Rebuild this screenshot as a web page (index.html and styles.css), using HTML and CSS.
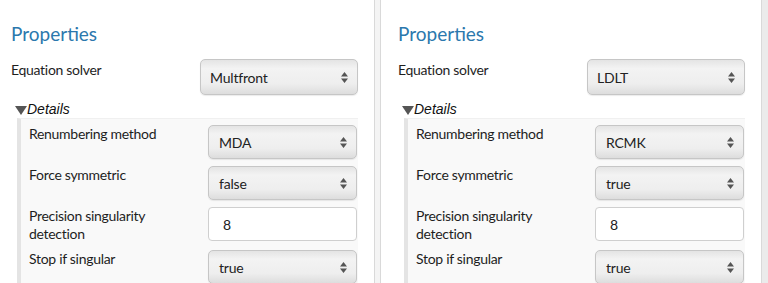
FILE: index.html
```html
<!DOCTYPE html>
<html lang="en">
<head>
  <meta charset="UTF-8">
  <title>Solver properties</title>
  <link rel="stylesheet" href="styles.css">
</head>
<body>
  <div class="page">
    <section class="panel panel-left">
      <h2 class="title">Properties</h2>
      <div class="row main-row">
        <span class="label">Equation solver</span>
        <div class="select wide"><span>Multfront</span>
          <svg class="arrows" width="7" height="11" viewBox="0 0 7 11"><path d="M3.5 0L7 4.5H0Z M3.5 11L0 6.5H7Z" fill="#555"/></svg>
        </div>
      </div>
      <div class="details-head">
        <svg class="caret" width="12" height="9" viewBox="0 0 12 9"><path d="M0 0H12L6 9Z" fill="#555"/></svg>
        <em>Details</em>
      </div>
      <div class="details">
        <div class="row">
          <span class="label">Renumbering method</span>
          <div class="select"><span>MDA</span>
            <svg class="arrows" width="7" height="11" viewBox="0 0 7 11"><path d="M3.5 0L7 4.5H0Z M3.5 11L0 6.5H7Z" fill="#555"/></svg>
          </div>
        </div>
        <div class="row">
          <span class="label">Force symmetric</span>
          <div class="select"><span>false</span>
            <svg class="arrows" width="7" height="11" viewBox="0 0 7 11"><path d="M3.5 0L7 4.5H0Z M3.5 11L0 6.5H7Z" fill="#555"/></svg>
          </div>
        </div>
        <div class="row">
          <span class="label">Precision singularity detection</span>
          <div class="input">8</div>
        </div>
        <div class="row">
          <span class="label">Stop if singular</span>
          <div class="select"><span>true</span>
            <svg class="arrows" width="7" height="11" viewBox="0 0 7 11"><path d="M3.5 0L7 4.5H0Z M3.5 11L0 6.5H7Z" fill="#555"/></svg>
          </div>
        </div>
      </div>
    </section>

    <div class="gutter"></div>

    <section class="panel panel-right">
      <h2 class="title">Properties</h2>
      <div class="row main-row">
        <span class="label">Equation solver</span>
        <div class="select wide"><span>LDLT</span>
          <svg class="arrows" width="7" height="11" viewBox="0 0 7 11"><path d="M3.5 0L7 4.5H0Z M3.5 11L0 6.5H7Z" fill="#555"/></svg>
        </div>
      </div>
      <div class="details-head">
        <svg class="caret" width="12" height="9" viewBox="0 0 12 9"><path d="M0 0H12L6 9Z" fill="#555"/></svg>
        <em>Details</em>
      </div>
      <div class="details">
        <div class="row">
          <span class="label">Renumbering method</span>
          <div class="select"><span>RCMK</span>
            <svg class="arrows" width="7" height="11" viewBox="0 0 7 11"><path d="M3.5 0L7 4.5H0Z M3.5 11L0 6.5H7Z" fill="#555"/></svg>
          </div>
        </div>
        <div class="row">
          <span class="label">Force symmetric</span>
          <div class="select"><span>true</span>
            <svg class="arrows" width="7" height="11" viewBox="0 0 7 11"><path d="M3.5 0L7 4.5H0Z M3.5 11L0 6.5H7Z" fill="#555"/></svg>
          </div>
        </div>
        <div class="row">
          <span class="label">Precision singularity detection</span>
          <div class="input">8</div>
        </div>
        <div class="row">
          <span class="label">Stop if singular</span>
          <div class="select"><span>true</span>
            <svg class="arrows" width="7" height="11" viewBox="0 0 7 11"><path d="M3.5 0L7 4.5H0Z M3.5 11L0 6.5H7Z" fill="#555"/></svg>
          </div>
        </div>
      </div>
    </section>
  </div>
</body>
</html>
```

FILE: styles.css
```css
body {
  margin: 0;
  background: #ebebeb;
  font-family: Lato, 'Noto Sans', sans-serif;
  color: #1e1e1e;
}
.page {
  display: flex;
  height: 283px;
  overflow: hidden;
}
.panel {
  width: 347px;
  flex: none;
  background: white;
  padding: 22px 16px 0 11px;
  border-right: 1px solid #d9d9d9;
}
.panel-right {
  padding-left: 17px;
  border-left: 1px solid #d9d9d9;
}
.gutter {
  width: 5px;
  flex: none;
  background: #f4f4f4;
}
.title {
  margin: 0 0 13px;
  font-size: 19px;
  line-height: 24px;
  font-weight: normal;
  color: #2b78ad;
}
.row {
  display: flex;
  justify-content: space-between;
  align-items: flex-start;
  margin-bottom: 7px;
}
.label {
  font-size: 14px;
  line-height: 18px;
  letter-spacing: -0.3px;
  width: 165px;
}
.main-row {
  margin-bottom: 5px;
}
.main-row .label {
  padding-top: 2px;
}
.select {
  position: relative;
  box-sizing: border-box;
  width: 149px;
  height: 34px;
  padding: 0 0 0 10px;
  display: flex;
  align-items: center;
  font-size: 14px;
  letter-spacing: -0.2px;
  color: #222;
  border: 1px solid #c6c6c6;
  border-radius: 5px;
  background: linear-gradient(#e4e4e4, #f3f3f3 25%, #eeeeee 70%, #dddddd);
  box-shadow: 0 1px 1px rgba(0,0,0,0.08);
}
.select.wide {
  width: 158px;
  height: 36px;
  padding-left: 9px;
}
.arrows {
  position: absolute;
  right: 9px;
  top: 50%;
  margin-top: -5px;
}
.input {
  box-sizing: border-box;
  width: 149px;
  height: 34px;
  padding-left: 14px;
  display: flex;
  align-items: center;
  font-size: 14px;
  color: #222;
  background: white;
  border: 1px solid #cfcfcf;
  border-radius: 4px;
}
.details-head {
  display: flex;
  align-items: center;
  height: 18px;
  margin-left: 4px;
}
.caret {
  margin-top: 2px;
}
.details-head em {
  font-family: 'Liberation Sans', Arial, sans-serif;
  font-size: 14px;
  color: #111;
}
.details {
  margin-left: 6px;
  padding: 6px 1px 0 8px;
  border-left: 4px solid #e4e4e4;
  border-top: 1px solid #f0f0f0;
  background: #f9f9f9;
  height: 200px;
}
```
